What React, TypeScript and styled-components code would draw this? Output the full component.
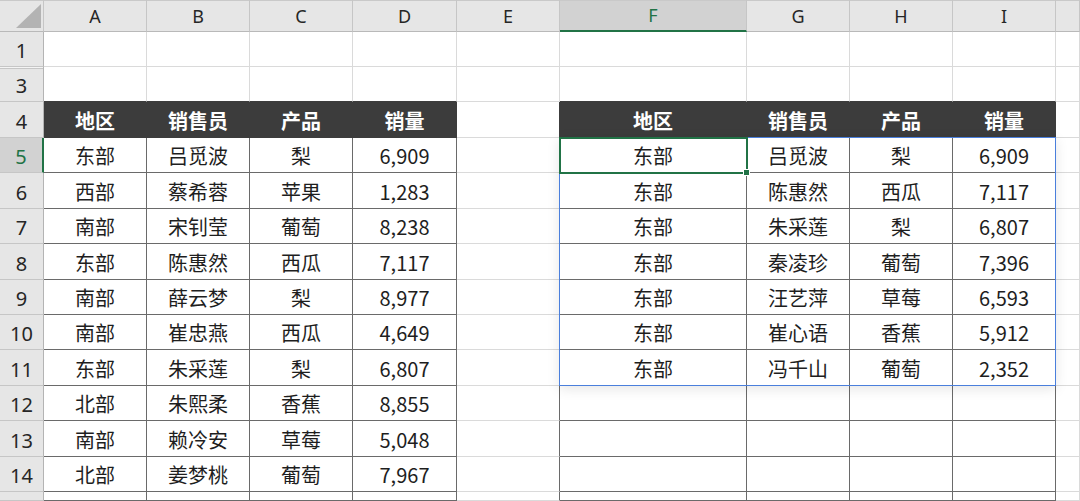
import React from 'react';
import styled, { createGlobalStyle, css } from 'styled-components';

const GRID = '#dadada';
const LINE = '#6a6a6a';
const HEAD = '#3c3c3c';
const HDR_BG = '#e6e6e6';
const HDR_SEL = '#d2d2d2';
const HDR_LINE = '#c6c6c6';
const GREEN = '#217346';
const BLUE = '#4a7fdc';

const COL_WIDTHS = [44, 103, 103, 103, 104, 103, 187, 103, 103, 103, 24];
const ROW_HEIGHTS = [32, 35, 35, 36, 35, 36, 35, 36, 35, 35, 36, 35, 36, 35, 9];
const COL_LETTERS = ['A', 'B', 'C', 'D', 'E', 'F', 'G', 'H', 'I', ''];
const ROW_NUMS = [1, 3, 4, 5, 6, 7, 8, 9, 10, 11, 12, 13, 14, 15];

const HEADERS = ['地区', '销售员', '产品', '销量'];

const LEFT_DATA = [
  ['东部', '吕觅波', '梨', '6,909'],
  ['西部', '蔡希蓉', '苹果', '1,283'],
  ['南部', '宋钊莹', '葡萄', '8,238'],
  ['东部', '陈惠然', '西瓜', '7,117'],
  ['南部', '薛云梦', '梨', '8,977'],
  ['南部', '崔忠燕', '西瓜', '4,649'],
  ['东部', '朱采莲', '梨', '6,807'],
  ['北部', '朱熙柔', '香蕉', '8,855'],
  ['南部', '赖冷安', '草莓', '5,048'],
  ['北部', '姜梦桃', '葡萄', '7,967'],
];

const RIGHT_DATA = [
  ['东部', '吕觅波', '梨', '6,909'],
  ['东部', '陈惠然', '西瓜', '7,117'],
  ['东部', '朱采莲', '梨', '6,807'],
  ['东部', '秦凌珍', '葡萄', '7,396'],
  ['东部', '汪艺萍', '草莓', '6,593'],
  ['东部', '崔心语', '香蕉', '5,912'],
  ['东部', '冯千山', '葡萄', '2,352'],
];

const GlobalStyle = createGlobalStyle`
  html, body {
    margin: 0;
    padding: 0;
    background: #ffffff;
    overflow: hidden;
  }
  body {
    font-family: "Noto Sans", "Noto Sans CJK SC", sans-serif;
  }
`;

const Sheet = styled.div`
  display: grid;
  grid-template-columns: ${COL_WIDTHS.map((w) => `${w}px`).join(' ')};
  grid-template-rows: ${ROW_HEIGHTS.map((h) => `${h}px`).join(' ')};
  width: 1080px;
  height: 501px;
  overflow: hidden;
  background: #fff;
`;

const Corner = styled.div`
  grid-row: 1;
  grid-column: 1;
  box-sizing: border-box;
  background: ${HDR_BG};
  border-right: 1px solid ${HDR_LINE};
  border-bottom: 1px solid #b9b9b9;
  box-shadow: inset 0 1px 0 #c9c9c9;
  display: flex;
  align-items: flex-end;
  justify-content: flex-end;
  padding: 0 2px 3px 0;
`;

const ColHeader = styled.div<{ $c: number; $sel?: boolean }>`
  grid-row: 1;
  grid-column: ${(p) => p.$c};
  box-sizing: border-box;
  background: ${HDR_BG};
  border-right: 1px solid ${HDR_LINE};
  border-bottom: 1px solid #b9b9b9;
  box-shadow: inset 0 1px 0 #c9c9c9;
  display: flex;
  align-items: center;
  justify-content: center;
  font-family: "Noto Sans", sans-serif;
  font-size: 18px;
  color: #262626;
  ${(p) =>
    p.$sel &&
    css`
      background: ${HDR_SEL};
      color: ${GREEN};
      border-bottom: 2px solid ${GREEN};
    `}
`;

const RowHeader = styled.div<{ $r: number; $sel?: boolean; $hiddenAbove?: boolean }>`
  grid-row: ${(p) => p.$r};
  grid-column: 1;
  box-sizing: border-box;
  background: ${HDR_BG};
  border-right: 1px solid #b4b4b4;
  border-bottom: 1px solid ${HDR_LINE};
  display: flex;
  align-items: center;
  justify-content: center;
  padding-top: 3px;
  font-family: "Noto Sans", sans-serif;
  font-size: 20px;
  color: #262626;
  ${(p) =>
    p.$hiddenAbove &&
    css`
      box-shadow: inset 0 1px 0 #f4f4f4, inset 0 2px 0 ${HDR_LINE};
    `}
  ${(p) =>
    p.$sel &&
    css`
      background: ${HDR_SEL};
      color: ${GREEN};
      border-right: 2px solid ${GREEN};
    `}
`;

type Kind = 'plain' | 'head' | 'body';

const Cell = styled.div<{ $r: number; $c: number; $rb: string; $bb: string; $kind: Kind }>`
  grid-row: ${(p) => p.$r};
  grid-column: ${(p) => p.$c};
  box-sizing: border-box;
  border-right: 1px solid ${(p) => p.$rb};
  border-bottom: 1px solid ${(p) => p.$bb};
  display: flex;
  align-items: center;
  justify-content: center;
  padding-top: 2px;
  font-family: "Noto Sans CJK SC", "Noto Sans", sans-serif;
  font-size: 20px;
  line-height: 1;
  color: #1e1e1e;
  background: #ffffff;
  white-space: nowrap;
  ${(p) =>
    p.$kind === 'head' &&
    css`
      background: ${HEAD};
      color: #ffffff;
      font-weight: 700;
    `}
`;

const TableFrame = styled.div`
  grid-row: 5 / 12;
  grid-column: 7 / 11;
  margin: -1px 0 0 -1px;
  border: 1px solid ${BLUE};
  box-shadow: 0 3px 12px rgba(0, 0, 0, 0.1);
  position: relative;
  z-index: 1;
  pointer-events: none;
`;

const Selection = styled.div`
  grid-row: 5;
  grid-column: 7;
  margin: -1px;
  border: 2px solid ${GREEN};
  position: relative;
  z-index: 2;
  pointer-events: none;
`;

const FillHandle = styled.span`
  position: absolute;
  right: -4px;
  bottom: -4px;
  width: 5px;
  height: 5px;
  background: ${GREEN};
  border: 1px solid #ffffff;
`;

function CornerMark() {
  return (
    <svg width="25" height="24" viewBox="0 0 25 24">
      <polygon points="0,24 25,24 25,0" fill="#b3b3b3" />
    </svg>
  );
}

function buildCells() {
  const out: React.ReactNode[] = [];
  ROW_NUMS.forEach((rowNum, ri) => {
    const r = ri + 2;
    out.push(
      <RowHeader key={`rh-${rowNum}`} $r={r} $sel={rowNum === 5} $hiddenAbove={rowNum === 3}>
        {rowNum === 15 ? '' : rowNum}
      </RowHeader>
    );
    for (let c = 0; c < 10; c++) {
      const inLeft = c <= 3 && rowNum >= 4;
      const inRight = c >= 5 && c <= 8 && rowNum >= 4;
      const inTable = inLeft || inRight;
      const isHead = rowNum === 4 && inTable;
      const kind: Kind = isHead ? 'head' : inTable ? 'body' : 'plain';

      let rb = GRID;
      if (inTable) rb = isHead ? HEAD : LINE;
      else if (c === 4 && rowNum >= 4) rb = rowNum === 4 ? HEAD : LINE;

      let bb = GRID;
      if (inTable) bb = isHead ? HEAD : LINE;
      else if (rowNum === 3 && (c <= 3 || (c >= 5 && c <= 8))) bb = HEAD;

      let text = '';
      if (isHead) text = HEADERS[inLeft ? c : c - 5];
      else if (inLeft && rowNum >= 5 && rowNum <= 14) text = LEFT_DATA[rowNum - 5][c];
      else if (inRight && rowNum >= 5 && rowNum <= 11) text = RIGHT_DATA[rowNum - 5][c - 5];

      out.push(
        <Cell key={`c-${rowNum}-${c}`} $r={r} $c={c + 2} $rb={rb} $bb={bb} $kind={kind}>
          {text}
        </Cell>
      );
    }
  });
  return out;
}

export default function App() {
  return (
    <>
      <GlobalStyle />
      <Sheet>
        <Corner>
          <CornerMark />
        </Corner>
        {COL_LETTERS.map((l, i) => (
          <ColHeader key={`ch-${i}`} $c={i + 2} $sel={l === 'F'}>
            {l}
          </ColHeader>
        ))}
        {buildCells()}
        <TableFrame />
        <Selection>
          <FillHandle />
        </Selection>
      </Sheet>
    </>
  );
}
